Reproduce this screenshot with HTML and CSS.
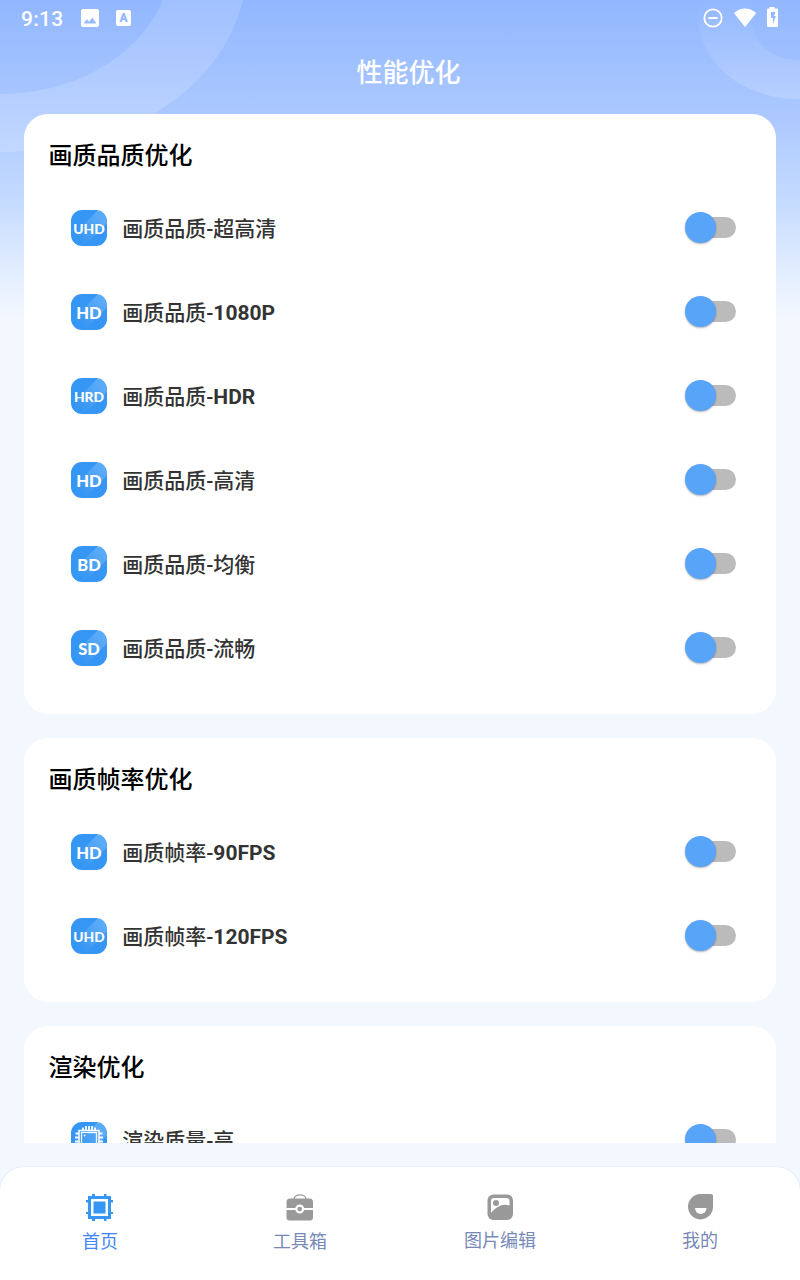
FILE: index.html
```html
<!DOCTYPE html>
<html lang="zh-CN">
<head>
    <meta charset="UTF-8">
    <title>性能优化</title>
    <link rel="stylesheet" href="styles.css">
</head>
<body>
<div class="app">
    <svg class="rings" width="800" height="160" viewBox="0 0 800 160">
        <defs>
            <linearGradient id="ring" x1="0" y1="0" x2="0" y2="160" gradientUnits="userSpaceOnUse">
                <stop offset="0" stop-color="#fff" stop-opacity=".13"/>
                <stop offset="1" stop-color="#fff" stop-opacity=".18"/>
            </linearGradient>
            <linearGradient id="ring2" x1="0" y1="0" x2="0" y2="100" gradientUnits="userSpaceOnUse">
                <stop offset="0" stop-color="#fff" stop-opacity="0"/>
                <stop offset="1" stop-color="#fff" stop-opacity=".18"/>
            </linearGradient>
        </defs>
        <path d="M163 0C140 54 78 94 0 94V152C126 152 221 90 243 0Z" fill="url(#ring)"/>
        <path d="M699 0C690 52 733 99 800 99V60C768 60 744 38 753 0Z" fill="url(#ring2)"/>
    </svg>

    <div class="status-bar">
        <span class="time">9:13</span>
        <svg class="status-photo" width="18" height="18" viewBox="0 0 18 18">
            <path fill="#fff" fill-rule="evenodd" d="M2 0h14a2 2 0 0 1 2 2v14a2 2 0 0 1-2 2H2a2 2 0 0 1-2-2V2a2 2 0 0 1 2-2zM2.500 14.500h13l-4.200-6-3.300 4.300-2-2.600z"/>
        </svg>
        <div class="status-a">A</div>
        <svg class="status-right" width="76" height="22" viewBox="0 0 76 22">
            <circle cx="10" cy="11" r="8.700" fill="none" stroke="#fff" stroke-width="1.800"/>
            <path d="M5.500 11h9" stroke="#fff" stroke-width="2"/>
            <path d="M31 5.300Q42 -3.500 53.300 5.300L42 19.500z" transform="translate(0 .6)" fill="#fff"/>
            <path fill="#fff" fill-rule="evenodd" d="M66.500 0h5v1.500H74a1 1 0 0 1 1 1V19a1 1 0 0 1-1 1H65a1 1 0 0 1-1-1V2.500a1 1 0 0 1 1-1h1.500zM68 5v6h2v6l3-8h-2l1.500-4z"/>
        </svg>
    </div>

    <h1 class="page-title">性能优化</h1>

    <main class="content">
        <section class="card">
            <h2 class="card-title">画质品质优化</h2>
            <div class="item"><span class="badge small">UHD</span><span class="label">画质品质-超高清</span><span class="switch"></span></div>
            <div class="item"><span class="badge">HD</span><span class="label">画质品质-<b>1080P</b></span><span class="switch"></span></div>
            <div class="item"><span class="badge small">HRD</span><span class="label">画质品质-<b>HDR</b></span><span class="switch"></span></div>
            <div class="item"><span class="badge">HD</span><span class="label">画质品质-高清</span><span class="switch"></span></div>
            <div class="item"><span class="badge">BD</span><span class="label">画质品质-均衡</span><span class="switch"></span></div>
            <div class="item"><span class="badge">SD</span><span class="label">画质品质-流畅</span><span class="switch"></span></div>
        </section>

        <section class="card">
            <h2 class="card-title">画质帧率优化</h2>
            <div class="item"><span class="badge">HD</span><span class="label">画质帧率-<b>90FPS</b></span><span class="switch"></span></div>
            <div class="item"><span class="badge small">UHD</span><span class="label">画质帧率-<b>120FPS</b></span><span class="switch"></span></div>
        </section>

        <section class="card">
            <h2 class="card-title">渲染优化</h2>
            <div class="item">
                <span class="badge chip">
                    <svg width="36" height="36" viewBox="0 0 36 36" fill="none" stroke="#fff">
                        <rect x="10.500" y="10.500" width="15" height="16" stroke-width="1.300"/>
                        <path stroke-width="1.800" d="M12 8.500V5.500M15 8.500V4M18 8.500V4M21 8.500V4M24 8.500V5.500M8 11.500H4.500M8 15.500H4M8 19.500H4M8 23.500H4.500M28 11.500h3.500M28 15.500h4M28 19.500h4M28 23.500h3.500"/>
                        <path stroke-width="1.500" d="M8 27V8.500h20V27"/>
                        <circle cx="13.500" cy="13.500" r="1" fill="#fff" stroke="none"/>
                    </svg>
                </span>
                <span class="label">渲染质量-高</span><span class="switch"></span>
            </div>
        </section>
    </main>

    <nav class="tabs">
        <a class="tab active">
            <svg width="28" height="28" viewBox="0 0 28 28" fill="#3596f3">
                <path fill-rule="evenodd" d="M2 3h4V1h3v2h9V1h2.500v2H25v4h2v2.500h-2V19h2v2h-2v5h-4.500v2H18v-2H9v2H6v-2H2v-5H0v-2h2V9.500H0V7h2zM5 6v17h17V6z"/>
                <path d="M7.500 8.500h12v12h-12z"/>
            </svg>
            <span>首页</span>
        </a>
        <a class="tab">
            <svg width="28" height="28" viewBox="0 0 28 28" fill="#999">
                <path d="M8 6C8 .5 20 .5 20 6" fill="none" stroke="#999" stroke-width="1.200"/>
                <path d="M4 5.500h19.500a3.500 3.500 0 0 1 3.500 3.500V15H.500V9A3.500 3.500 0 0 1 4 5.500zM.500 17H27v7.500a3 3 0 0 1-3 3H3.500a3 3 0 0 1-3-3z"/>
                <circle cx="13.700" cy="16" r="3.400" stroke="#fff" stroke-width="2.200"/>
            </svg>
            <span>工具箱</span>
        </a>
        <a class="tab raised">
            <svg width="28" height="28" viewBox="0 0 28 28">
                <rect x="1.500" y="1.500" width="25.500" height="25.500" rx="6" fill="#999"/>
                <path d="M5 20V8a3 3 0 0 1 3-3h12.500a3 3 0 0 1 3 3v4.500C15 10 10 14.500 5 20z" fill="#fff"/>
                <circle cx="10" cy="10" r="3" fill="#999"/>
            </svg>
            <span>图片编辑</span>
        </a>
        <a class="tab raised">
            <svg width="28" height="28" viewBox="0 0 28 28">
                <path d="M14.500 1H25a2 2 0 0 1 2 2v11A12.500 12.700 0 1 1 14.500 1z" fill="#999"/>
                <path d="M9 15h11.500a5.700 6 0 0 1-11.500 0z" fill="#fff"/>
            </svg>
            <span>我的</span>
        </a>
    </nav>
</div>
</body>
</html>
```
FILE: styles.css
```css
* {
    box-sizing: border-box;
}

body {
    margin: 0;
    font-family: Roboto, "Noto Sans CJK SC", sans-serif;
}

.app {
    position: relative;
    display: flex;
    flex-direction: column;
    width: 800px;
    height: 1280px;
    overflow: hidden;
    background: linear-gradient(#92b7ff 0, #abc8ff 114px, #c4daff 200px, #deebff 260px, #f3f8ff 320px);
}

.rings {
    position: absolute;
    left: 0;
    top: 0;
}

.status-bar {
    position: relative;
    display: flex;
    align-items: center;
    height: 36px;
    padding: 0 21px;
    color: #fff;
}

.time {
    width: 60px;
    padding-top: 2px;
    font-size: 21px;
    font-weight: 500;
    letter-spacing: 0.3px;
}

.status-photo {
    margin-right: 17px;
}

.status-a {
    width: 15px;
    height: 16px;
    border-radius: 2px;
    background: #fff;
    color: #94b8ff;
    font-size: 12px;
    font-weight: 900;
    line-height: 16px;
    text-align: center;
}

.status-right {
    margin-left: auto;
}

.page-title {
    position: relative;
    height: 78px;
    margin: 0;
    padding-left: 17px;
    color: #fff;
    font-size: 26px;
    font-weight: 500;
    line-height: 74px;
    text-align: center;
}

.content {
    position: relative;
    height: 1029px;
    padding: 0 24px;
    overflow: hidden;
}

.card {
    margin-bottom: 24px;
    padding-bottom: 24px;
    border-radius: 24px;
    background: #fff;
}

.card-title {
    height: 72px;
    margin: 0;
    padding: 0 24px 0 24.5px;
    color: #000;
    font-size: 24px;
    font-weight: 500;
    line-height: 84px;
}

.item {
    display: flex;
    align-items: center;
    height: 84px;
    padding: 0 40px 0 47px;
}

/* diagonal shine, fading towards the lower left corner */
.badge {
    width: 36px;
    height: 36px;
    border-radius: 11px;
    background:
        linear-gradient(45deg, #3596f3 20%, rgba(53, 150, 243, 0) 80%),
        linear-gradient(135deg, #3596f3 37%, #5aaaf7 38%, #5aaaf7 68%, #3596f3 69%);
    color: #fff;
    font-family: Lato, sans-serif;
    font-size: 16.5px;
    font-weight: 900;
    line-height: 38px;
    text-align: center;
}

.badge.small {
    font-size: 13.8px;
    line-height: 37px;
}

.chip svg {
    display: block;
}

.label {
    margin-left: 15.2px;
    padding-top: 2px;
    color: #333;
    font-size: 21px;
    font-weight: 500;
    line-height: 30px;
}

.label b {
    font-weight: 700;
}

.switch {
    position: relative;
    width: 46px;
    height: 21px;
    margin-bottom: 1px;
    margin-left: auto;
    border-radius: 11px;
    background: #bbb;
}

.switch::before {
    content: "";
    position: absolute;
    left: -5px;
    top: -5px;
    width: 31px;
    height: 31px;
    border-radius: 50%;
    background: #58a4f9;
    box-shadow: 0 1px 2px rgba(0, 0, 0, 0.3);
}

.tabs {
    display: flex;
    height: 113px;
    margin-top: 24px;
    border-radius: 24px 24px 0 0;
    background: #fff;
    box-shadow: 0 0 2px rgba(60, 110, 180, 0.2);
}

.tab {
    display: flex;
    flex: 1;
    flex-direction: column;
    align-items: center;
    padding-top: 26px;
    color: #7789b7;
    font-size: 18px;
    line-height: 26px;
}

.tab span {
    margin-top: 8px;
}

.tab.raised span {
    margin-top: 7px;
}

.tab.active {
    color: #4086f7;
}
```
